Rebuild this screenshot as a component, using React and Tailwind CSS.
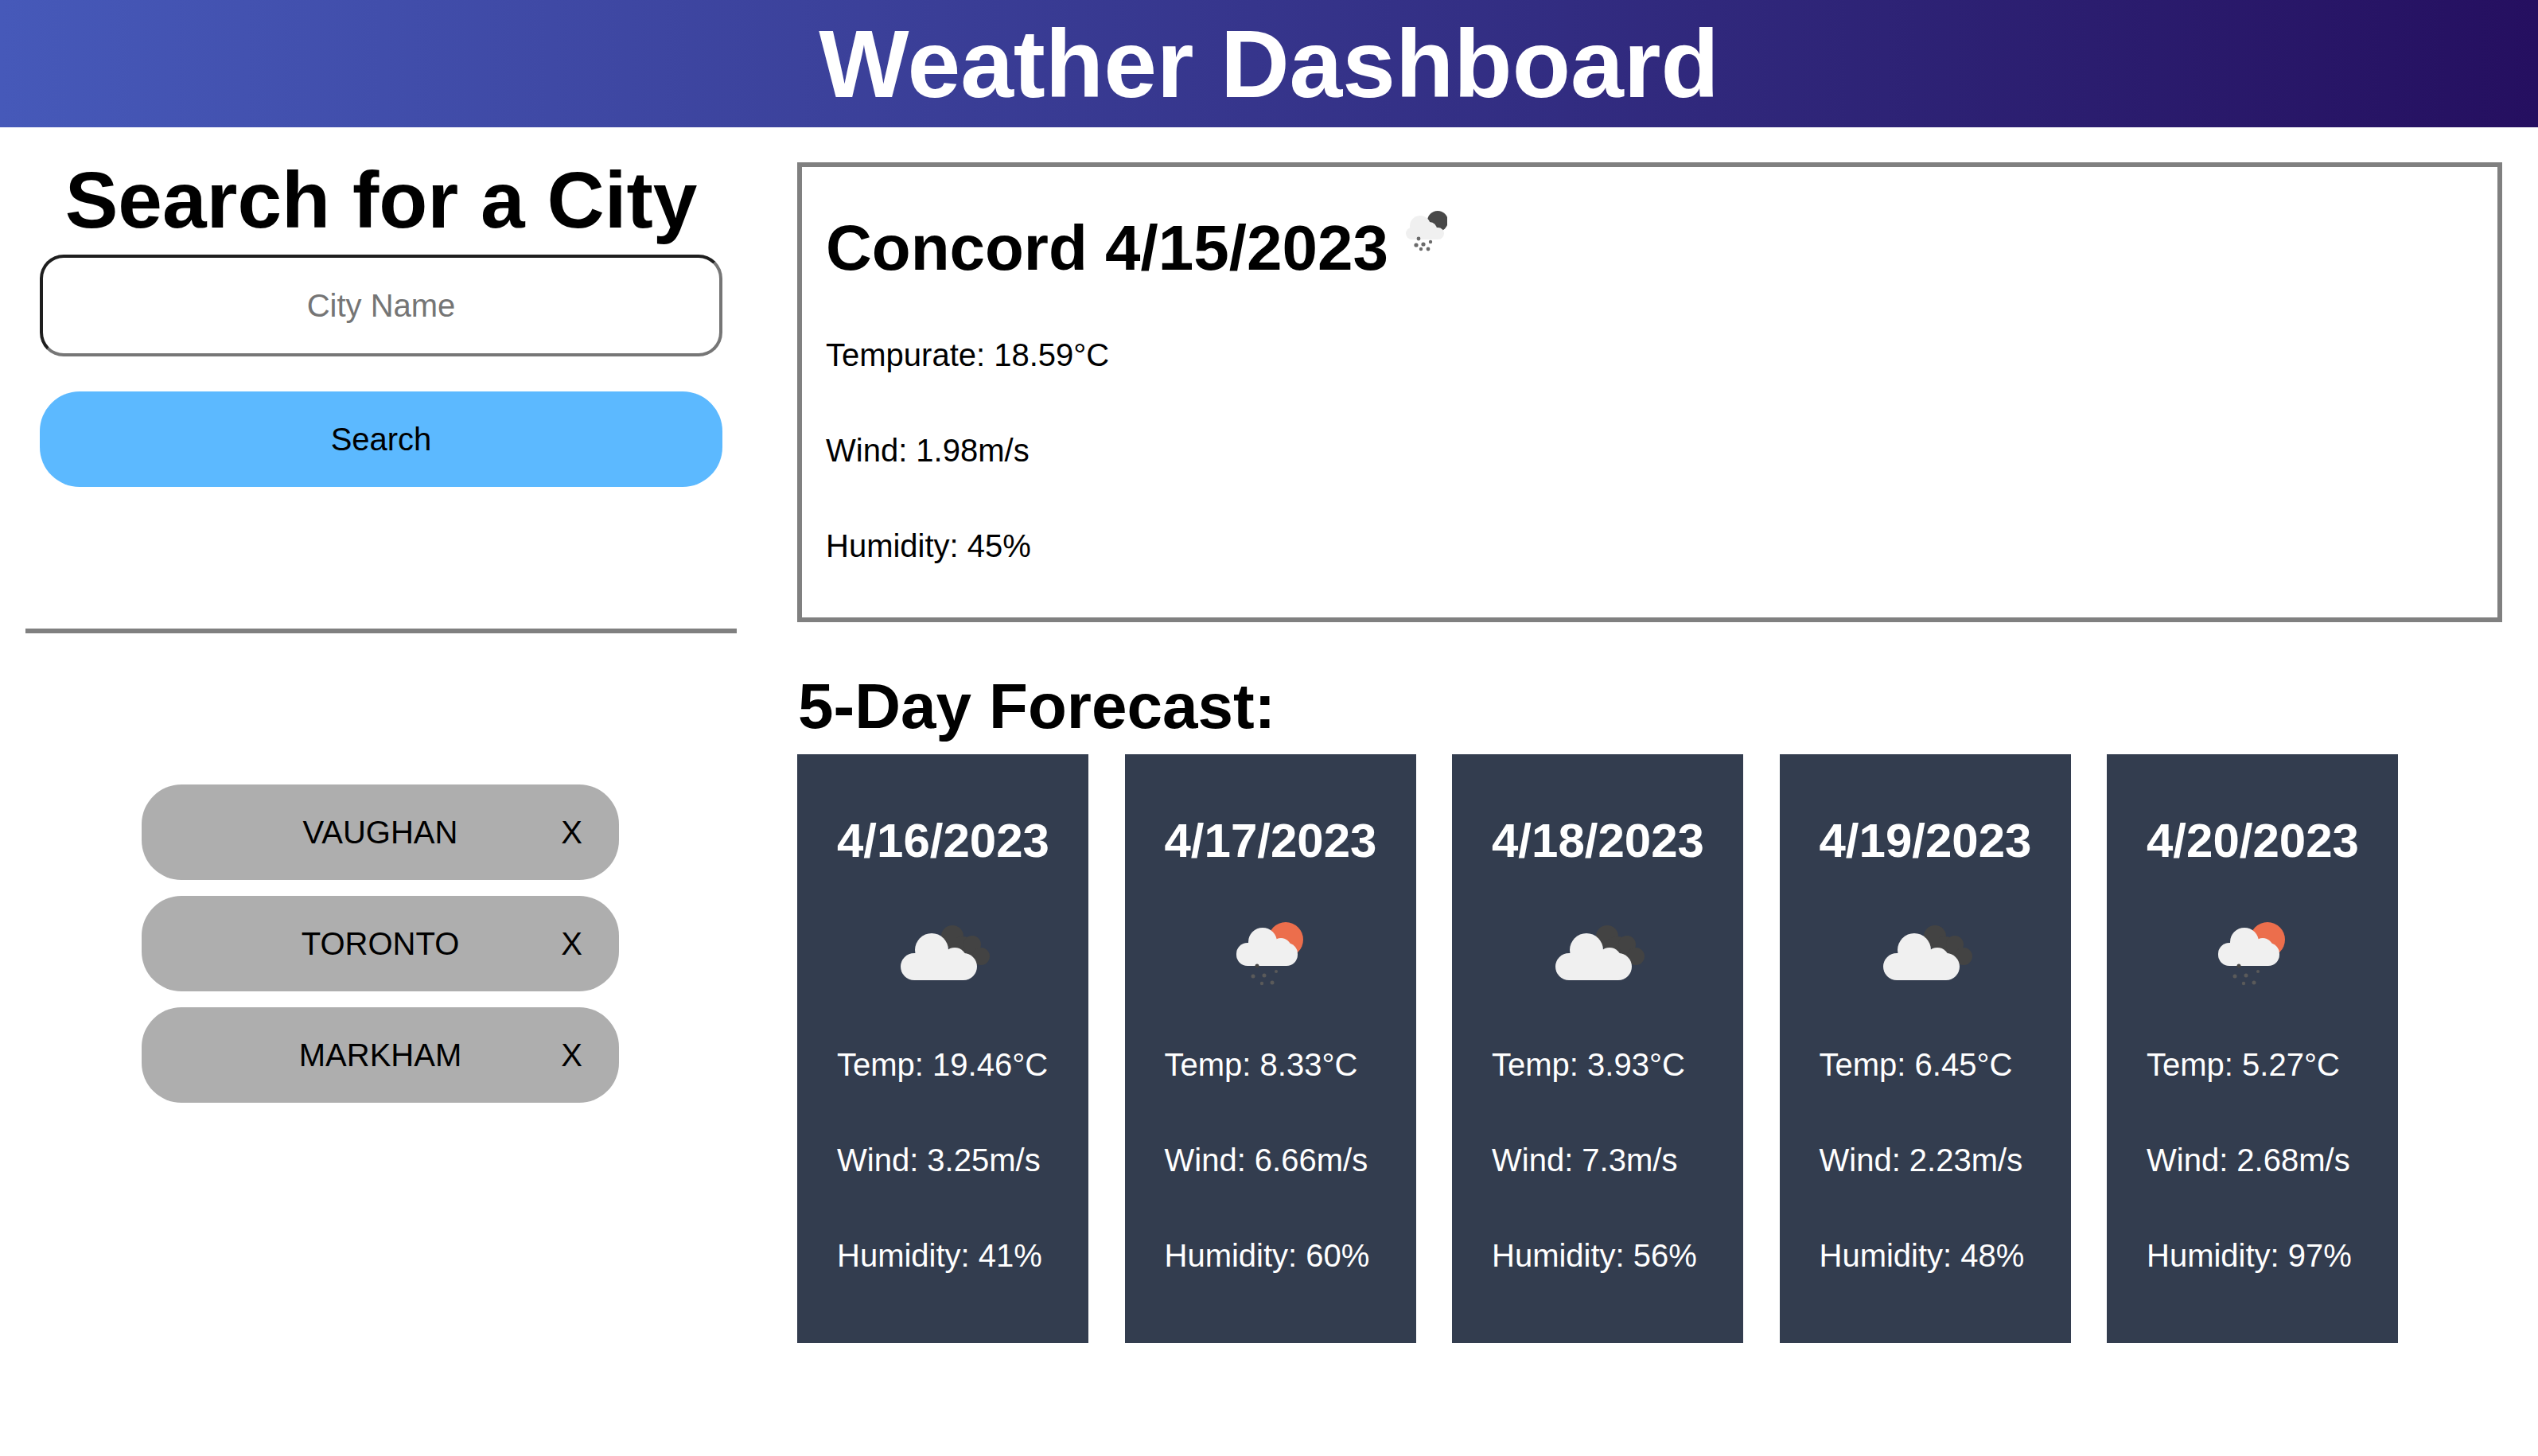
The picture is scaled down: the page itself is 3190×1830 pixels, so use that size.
const cities = ['VAUGHAN', 'TORONTO', 'MARKHAM']

const forecast = [
  { date: '4/16/2023', icon: 'clouds', temp: '19.46', wind: '3.25', humidity: '41' },
  { date: '4/17/2023', icon: 'rain', temp: '8.33', wind: '6.66', humidity: '60' },
  { date: '4/18/2023', icon: 'clouds', temp: '3.93', wind: '7.3', humidity: '56' },
  { date: '4/19/2023', icon: 'clouds', temp: '6.45', wind: '2.23', humidity: '48' },
  { date: '4/20/2023', icon: 'rain', temp: '5.27', wind: '2.68', humidity: '97' },
]

const CloudsIcon = () => (
  <svg viewBox="15 -10 160 160" className="w-[160px] h-[160px] blur-[0.6px]">
    <g fill="#434343">
      <circle cx="107" cy="47" r="14" />
      <circle cx="120" cy="65" r="18" />
      <circle cx="132" cy="57" r="11" />
      <circle cx="143" cy="72" r="11" />
    </g>
    <g fill="#f0f0f0">
      <rect x="42" y="68" width="96" height="34" rx="17" />
      <circle cx="81" cy="64" r="21" />
      <circle cx="110" cy="76" r="15" />
    </g>
  </svg>
)

const RainIcon = () => (
  <svg viewBox="-13 -10 160 160" className="w-[160px] h-[160px] blur-[0.6px]">
    <circle cx="86" cy="51" r="22" fill="#ec6e4c" />
    <g fill="#f0f0f0">
      <rect x="24" y="55" width="77" height="29" rx="14" />
      <circle cx="57" cy="54" r="18" />
      <circle cx="80" cy="62" r="13" />
    </g>
    <circle cx="50" cy="84" r="2.5" fill="#444444" />
    <g fill="#5a5a5a">
      <circle cx="45" cy="97" r="2.5" />
      <circle cx="59" cy="96" r="2.5" />
      <circle cx="74" cy="91" r="2" />
      <circle cx="56" cy="106" r="2.2" />
      <circle cx="69" cy="105" r="2.5" />
    </g>
  </svg>
)

const MainIcon = () => (
  <svg viewBox="40 20 60 60" className="w-[60px] h-[60px] ml-[14px] -mt-[6px] blur-[0.6px]">
    <circle cx="88" cy="38" r="13" fill="#484848" />
    <g fill="#f0f0f0">
      <rect x="48" y="46" width="48" height="15" rx="7.5" />
      <circle cx="66" cy="44" r="13" />
      <circle cx="78" cy="48" r="9" />
    </g>
    <g fill="#6a6a6a">
      <circle cx="64" cy="60" r="2.4" />
      <circle cx="61" cy="68" r="2.6" />
      <circle cx="70" cy="67" r="2.6" />
      <circle cx="79" cy="64" r="2.2" />
      <circle cx="67" cy="73" r="2.2" />
      <circle cx="76" cy="73" r="2.4" />
    </g>
  </svg>
)

const DayCard = ({ day }) => (
  <div className="w-[366px] h-[740px] bg-[#333d4f] text-white pt-[74px] px-[50px]">
    <h3 className="text-[60px] leading-[70px] font-bold whitespace-nowrap">{day.date}</h3>
    <div className="flex justify-center mt-[28px]">
      {day.icon === 'clouds' ? <CloudsIcon /> : <RainIcon />}
    </div>
    <div className="flex flex-col gap-[74px] mt-[35px] text-[40px] leading-[46px] whitespace-nowrap">
      <p>Temp: {day.temp}°C</p>
      <p>Wind: {day.wind}m/s</p>
      <p>Humidity: {day.humidity}%</p>
    </div>
  </div>
)

export default function App() {
  return (
    <div className="w-[3190px] h-[1830px] bg-white text-black font-['Liberation_Sans',sans-serif] overflow-hidden">
      <header className="h-[160px] flex items-center justify-center bg-gradient-to-r from-[#4659b9] to-[#250f60]">
        <h1 className="text-[120px] leading-[138px] font-bold text-white">Weather Dashboard</h1>
      </header>

      <div className="flex">
        <aside className="w-[958px] px-[32px] pt-[36px] flex flex-col items-center">
          <h2 className="text-[100px] leading-[110px] font-bold whitespace-nowrap">Search for a City</h2>
          <input
            type="text"
            placeholder="City Name"
            className="w-[858px] h-[128px] mt-[14px] text-[40px] text-center rounded-[30px] border-4 border-t-[#1e1e1e] border-l-[#1e1e1e] border-r-[#767676] border-b-[#767676] placeholder:text-[#757575]"
          />
          <button className="w-[858px] h-[120px] mt-[44px] text-[40px] rounded-[50px] bg-[#5cb9ff]">Search</button>
          <div className="w-full h-[6px] mt-[178px] bg-[#808080]"></div>
          <ul className="flex flex-col gap-[20px] mt-[190px] mr-[2px]">
            {cities.map(city => (
              <li key={city} className="w-[600px] h-[120px] grid grid-cols-[1fr_auto_1fr] items-center rounded-[50px] bg-[#aeaeae] text-[40px] px-[46px]">
                <span></span>
                <span>{city}</span>
                <span className="justify-self-end">X</span>
              </li>
            ))}
          </ul>
        </aside>

        <main className="w-[2143px] ml-[44px] pt-[44px]">
          <section className="h-[578px] border-[6px] border-[#808080] pl-[30px] pr-[32px] pt-[56px]">
            <div className="flex items-start">
              <h2 className="text-[80px] leading-[92px] font-bold whitespace-nowrap">Concord 4/15/2023</h2>
              <MainIcon />
            </div>
            <div className="flex flex-col gap-[74px] mt-[65px] text-[40px] leading-[46px]">
              <p>Tempurate: 18.59°C</p>
              <p>Wind: 1.98m/s</p>
              <p>Humidity: 45%</p>
            </div>
          </section>

          <h2 className="text-[80px] leading-[92px] font-bold mt-[60px] ml-[1px] whitespace-nowrap">5-Day Forecast:</h2>
          <div className="flex justify-between w-[2012px] mt-[14px]">
            {forecast.map(day => <DayCard key={day.date} day={day} />)}
          </div>
        </main>
      </div>
    </div>
  )
}
